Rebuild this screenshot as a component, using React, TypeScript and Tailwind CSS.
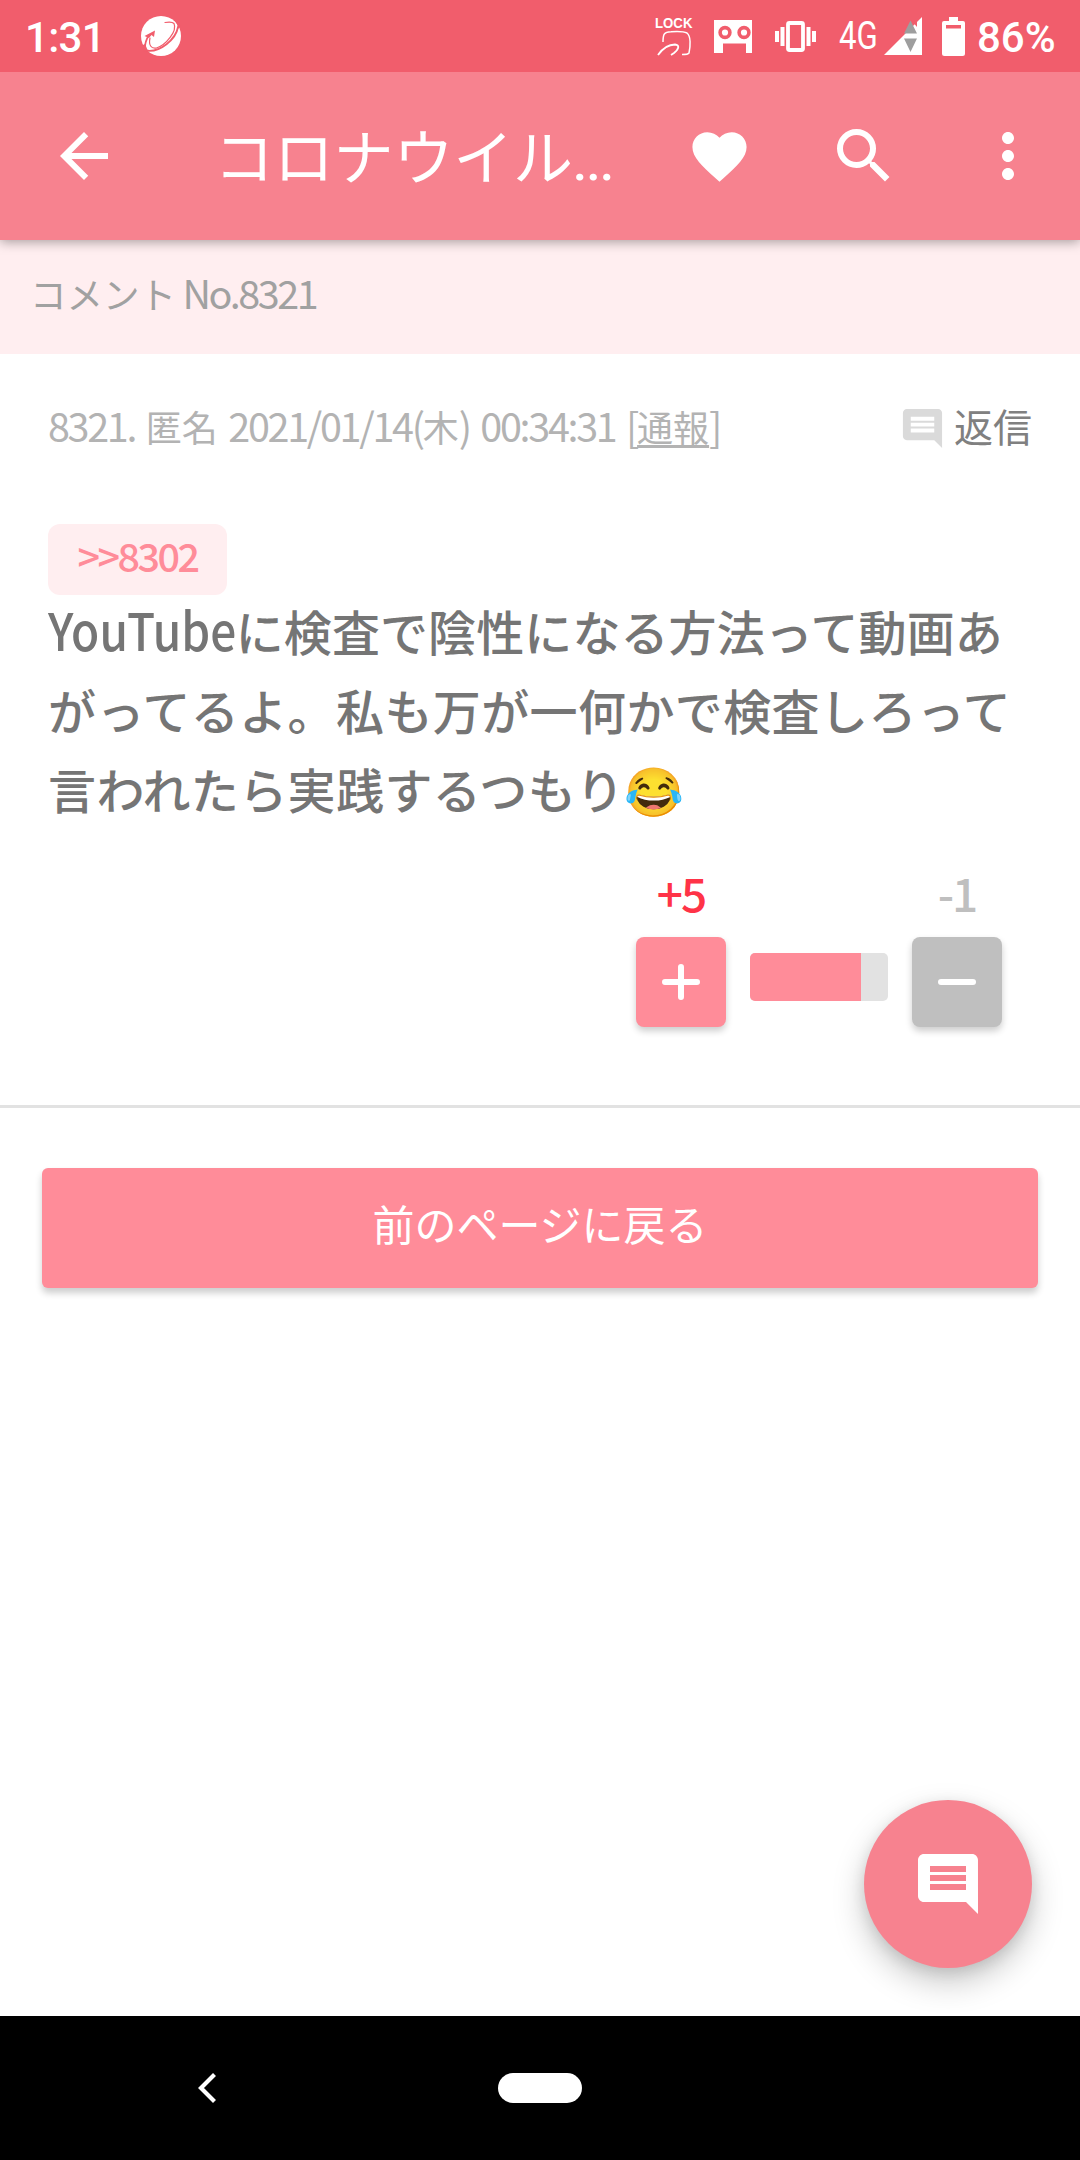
import type { ReactNode } from "react";
import { MdArrowBack, MdComment, MdFavorite, MdMoreVert, MdSearch } from "react-icons/md";

const comment = {
  no: 8321,
  name: "匿名",
  date: "2021/01/14",
  day: "木",
  time: "00:34:31",
  anchor: 8302,
  plus: 5,
  minus: 1,
};

function StatusBar() {
  return (
    <div className="relative z-20 flex h-[72px] items-center bg-[#f15d6c] font-['Roboto',sans-serif] text-white">
      <span className="ml-[25px] w-[116px] pt-[3px] text-[42px] leading-none font-medium tracking-[-0.7px]">1:31</span>

      <svg className="h-10 w-10" viewBox="0 0 40 40">
        <circle cx="20" cy="20" r="20" fill="#fff" />
        <g fill="none" stroke="#f15d6c" strokeLinecap="round">
          <path d="M24 6.500C28 5.800 31.500 5.800 33 7.500C36.500 15 25 29 15.500 32C10 33 7.500 29 9 22" strokeWidth="1.200" />
          <path d="M37 11C35 23 19 37 5 34.500" strokeWidth="1.800" />
          <path d="M4 31C4 27 5 24 8 19" strokeWidth="1.700" />
        </g>
        <path d="M3.500 20L14 14.500L13 21L10.500 19L8 22Z" fill="#f15d6c" />
        <path d="M33 4L40 9L37 13Q37 8 33 4Z" fill="#f15d6c" />
        <path d="M0 30L4 28L7 35L3 36Z" fill="#f15d6c" />
      </svg>

      <svg className="ml-[474px] h-[38px] w-[38px] overflow-visible" viewBox="0 0 38 38" fill="none" stroke="#fff">
        <text x="0" y="11" textLength="37.500" lengthAdjust="spacingAndGlyphs" fill="#fff" stroke="none" className="font-['Liberation_Sans',sans-serif] text-[14.5px] font-bold">
          LOCK
        </text>
        <path d="M8 25C8 17 9 15 16 14.700C23 14.200 29 14.500 32 16C36 19 35.500 29 34 36C33 37.500 30 37.500 27 37.500" strokeWidth="1.500" />
        <path d="M3 38C8 31 14 27.500 20 27.500C25 28 24 32 19 36L16 38" strokeWidth="1.800" />
      </svg>

      {/* Cardboard */}
      <svg className="ml-[21px] h-[33px] w-[38px]" viewBox="0 0 38 33">
        <path d="M0 0H38V33H32V23.500H9V33H0Z" fill="#fff" />
        <g fill="#fff" stroke="#f15d6c" strokeWidth="3.600">
          <circle cx="11" cy="12.500" r="4.900" />
          <circle cx="30" cy="12.500" r="4.900" />
        </g>
      </svg>

      {/* Vibrate */}
      <svg className="ml-[23px] h-[31px] w-[41px]" viewBox="0 0 41 31" fill="#fff">
        <rect x="13" y="2" width="15" height="27" rx="1.500" fill="none" stroke="#fff" strokeWidth="3.800" />
        <path d="M0 10h4v11H0zM5.500 6h4v19h-4zM31.500 6h4v19h-4zM37 10h4v11h-4z" />
      </svg>

      <span className="ml-[23px] w-[45px] origin-left scale-x-[0.82] text-[38px] leading-none">4G</span>

      {/* Signal */}
      <svg className="h-[38px] w-[38px]" viewBox="0 0 38 38">
        <path d="M38 0V38H0Z" fill="#fff" />
        <path d="M27 3L33 10V5z" fill="#f15d6c" />
        <path d="M26.500 3.500L33 16.500H20zM20 21.500H33L26.500 35z" fill="#9e9e9e" />
      </svg>

      {/* Battery */}
      <svg className="ml-5 h-[39px] w-[23px]" viewBox="0 0 23 39">
        <path d="M7 0H16V4H21Q23 4 23 6V36.500Q23 39 20.500 39H2.500Q0 39 0 36.500V6Q0 4 2 4H7Z" fill="#fff" />
        <path d="M4 8H19V11.500H4z" fill="#f15d6c" />
      </svg>
      <span className="ml-3 pt-[3px] text-[42px] leading-none font-medium">86%</span>
    </div>
  );
}

function AppBar() {
  return (
    <header className="relative z-10 flex h-[168px] items-center bg-[#f7828f] pl-12 text-white shadow-[0_2px_11px_rgba(0,0,0,0.35)]">
      <MdArrowBack size={72} />
      <h1 className="ml-[94px] w-[470px] text-[60px] leading-none tracking-[-0.2px] whitespace-nowrap">
        コロナウイル<span className="font-['Roboto',sans-serif] text-[52px] font-medium tracking-[-1px]">...</span>
      </h1>
      <MdFavorite size={65} className="ml-[3px]" />
      <MdSearch size={72} className="ml-[76px]" />
      <MdMoreVert size={72} className="ml-[72px]" />
    </header>
  );
}

// Latin letters and digits are set taller and tighter than the kana around them
function Latin({ children }: { children: ReactNode }) {
  return <span className="text-[39.5px] tracking-[-2.3px] [word-spacing:4px]">{children}</span>;
}

function VoteColumn({ label, color, children }: { label: string; color: string; children: ReactNode }) {
  return (
    <div className="flex w-[90px] flex-col items-center">
      <span className={`h-[68px] text-[46px] leading-[46px] font-medium tracking-[-2px] ${color}`}>{label}</span>
      {children}
    </div>
  );
}

export default function App() {
  const { no, name, date, day, time, anchor, plus, minus } = comment;

  return (
    <div className="flex h-[2160px] w-[1080px] flex-col overflow-hidden bg-white font-['Noto_Sans_CJK_JP',sans-serif]">
      <StatusBar />
      <AppBar />

      <div className="flex h-[114px] items-center bg-[#ffeef0] px-[30px] pb-[9px] text-[36.5px] leading-none text-[#a1a1a1]">
        <p className="whitespace-pre">
          コメント<span className="text-[39.5px] tracking-[-2.4px]"> No.{no}</span>
        </p>
      </div>

      <main className="flex flex-1 flex-col">
        <article className="flex h-[754px] flex-col border-b-[3px] border-[#e2e2e2] px-12">
          <div className="flex h-[170px] items-start justify-between pt-[49px] leading-[44px]">
            <p className="text-[36px] whitespace-pre text-[#b3b3b3]">
              <Latin>{no}. </Latin>{name}<Latin> {date}(</Latin>{day}<Latin>) {time} [</Latin>
              <a className="underline decoration-[3px] underline-offset-[3px]">通報</a><Latin>]</Latin>
            </p>
            <button className="flex items-start text-[39px] leading-[44px] text-[#808080]">
              <MdComment size={47} className="mt-[2px] mr-[8px] text-[#dadada]" />返信
            </button>
          </div>

          <a className="flex h-[71px] w-[179px] shrink-0 items-center justify-center rounded-xl bg-[#ffeef0] pb-[9px] text-[39.5px] leading-none font-medium tracking-[-2.5px] text-[#ff8c99]">
            &gt;&gt;{anchor}
          </a>

          <div className="-mt-[4px] text-[48px] leading-[79px] font-medium tracking-[0.4px] whitespace-nowrap text-[#757575]">
            <p className="tracking-[0.1px]">
              <span className="-mr-[25px] inline-block origin-left scale-x-[0.885] text-[52px] leading-none tracking-normal">YouTube</span>
              に検査で陰性になる方法って動画あ
            </p>
            <p>がってるよ。私も万が一何かで検査しろって</p>
            <p>言われたら実践するつもり<span className="font-['Noto_Color_Emoji',sans-serif]">😂</span></p>
          </div>

          <div className="mt-[37px] mr-[30px] flex justify-end gap-6">
            <VoteColumn label={`+${plus}`} color="text-[#ff3347]">
              <button className="flex h-[90px] w-[90px] items-center justify-center rounded-lg bg-[#ff8c99] shadow-[0_4px_7px_rgba(0,0,0,0.2)]">
                <svg width="38" height="36" viewBox="0 0 38 36" stroke="#fff" strokeWidth="6" strokeLinecap="round">
                  <path d="M3 18H35M19 3V33" />
                </svg>
              </button>
            </VoteColumn>
            <div className="mt-[84px] h-12 w-[138px] overflow-hidden rounded-[5px] bg-[#e2e2e2]">
              <div className="h-full w-[111px] bg-[#ff8c99]" />
            </div>
            <VoteColumn label={`-${minus}`} color="text-[#bfbfbf]">
              <button className="flex h-[90px] w-[90px] items-center justify-center rounded-lg bg-[#bfbfbf] shadow-[0_4px_7px_rgba(0,0,0,0.2)]">
                <svg width="38" height="36" viewBox="0 0 38 36" stroke="#fff" strokeWidth="6" strokeLinecap="round">
                  <path d="M3 18H35" />
                </svg>
              </button>
            </VoteColumn>
          </div>
        </article>

        <button className="mx-[42px] mt-[60px] h-[120px] rounded-md bg-[#ff8c99] pb-[11px] text-[42px] text-white shadow-[0_5px_7px_rgba(0,0,0,0.2)]">
          前のページに戻る
        </button>

        <button className="mt-auto mr-12 mb-12 flex h-[168px] w-[168px] items-center justify-center self-end rounded-full bg-[#f7828f] text-white shadow-[0_14px_32px_rgba(0,0,0,0.22),0_4px_14px_rgba(0,0,0,0.1)]">
          <MdComment size={72} />
        </button>
      </main>

      <nav className="flex h-36 items-center bg-black">
        <svg className="ml-[198px] h-[30px] w-[18px]" viewBox="0 0 18 30" fill="none" stroke="#fff" strokeWidth="4.200">
          <path d="M16.500 1.500L3 15L16.500 28.500" />
        </svg>
        <div className="ml-[282px] h-[30px] w-[84px] rounded-full bg-white" />
      </nav>
    </div>
  );
}
